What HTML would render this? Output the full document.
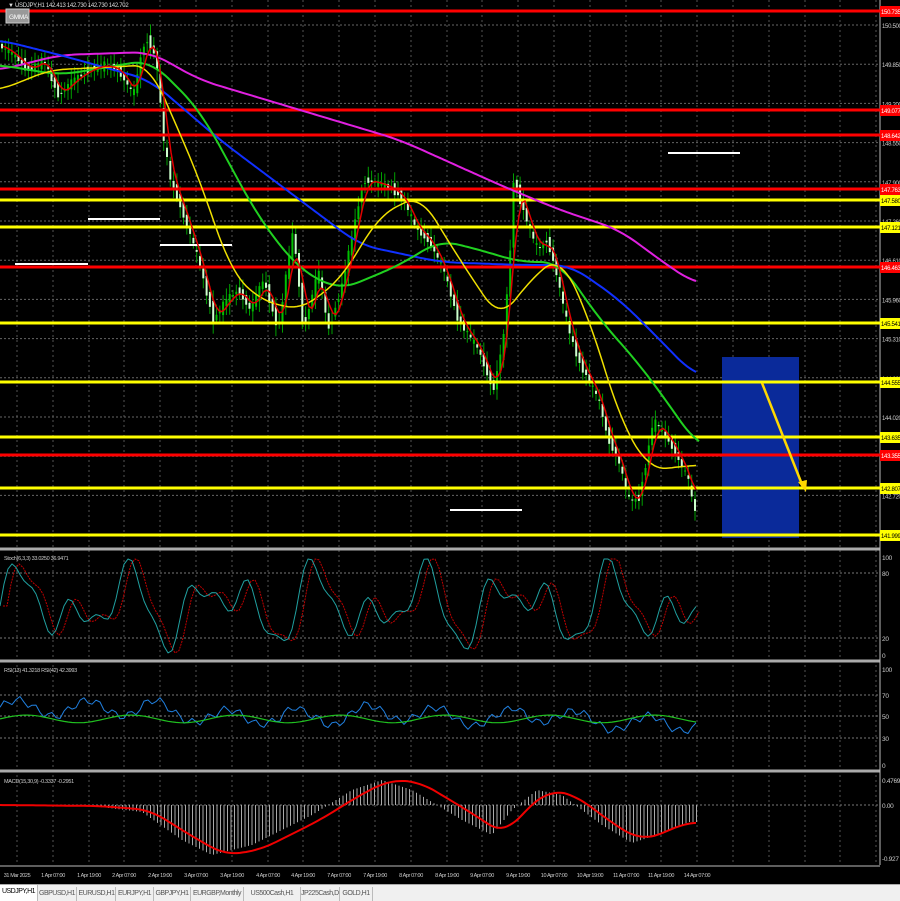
<!DOCTYPE html>
<html><head><meta charset="utf-8"><style>
html,body{margin:0;padding:0;background:#000;width:900px;height:900px;overflow:hidden;font-family:"Liberation Sans",sans-serif}
#tabs{position:absolute;left:0;top:884px;width:900px;height:16px;background:#f0f0f0;border-top:1px solid #aaa;font-size:7px;color:#555}
#tabs span{position:absolute;top:2px;height:14px;line-height:14px;border-right:1px solid #bbb;text-align:center;letter-spacing:-0.5px;white-space:nowrap;overflow:hidden}
</style></head><body>
<svg id="c" width="900" height="884" style="position:absolute;left:0;top:0" font-family="Liberation Sans, sans-serif"></svg>
<div id="tabs">
<span style="left:0;width:37px;background:#fff;color:#000;top:0;height:16px">USDJPY,H1</span>
<span style="left:38px;width:38px">GBPUSD,H1</span>
<span style="left:78px;width:37px">EURUSD,H1</span>
<span style="left:116px;width:37px">EURJPY,H1</span>
<span style="left:154px;width:36px">GBPJPY,H1</span>
<span style="left:191px;width:52px">EURGBP,Monthly</span>
<span style="left:244px;width:56px">US500Cash,H1</span>
<span style="left:301px;width:38px">JP225Cash,Daily</span>
<span style="left:340px;width:32px">GOLD,H1</span>
</div>
<script>
var s='';
function L(x1,y1,x2,y2,c,w,d){s+='<line x1="'+x1+'" y1="'+y1+'" x2="'+x2+'" y2="'+y2+'" stroke="'+c+'" stroke-width="'+(w||1)+'"'+(d?' stroke-dasharray="'+d+'"':'')+'/>';}
function T(x,y,t,c,sz,a,ls){s+='<text x="'+x+'" y="'+y+'" fill="'+(c||'#ccc')+'" font-size="'+(sz||6.5)+'"'+(a?' text-anchor="'+a+'"':'')+' letter-spacing="'+(ls||-0.3)+'">'+t+'</text>';}
function P(pts,c,w,d){s+='<polyline fill="none" stroke="'+c+'" stroke-width="'+(w||1.5)+'"'+(d?' stroke-dasharray="'+d+'"':'')+' stroke-linejoin="round" points="'+pts.map(function(p){return p[0].toFixed(1)+','+p[1].toFixed(1)}).join(' ')+'"/>';}
function interp(pts,x){if(x<=pts[0][0])return pts[0][1];for(var i=1;i<pts.length;i++){if(x<=pts[i][0]){var a=pts[i-1],b=pts[i];var t=(x-a[0])/(b[0]-a[0]);return a[1]+(b[1]-a[1])*t;}}return pts[pts.length-1][1];}
function smooth(pts,step,win){win=win||8;var raw=[];for(var x=pts[0][0];x<=pts[pts.length-1][0];x+=step)raw.push([x,interp(pts,x)]);var o=[];for(var i=0;i<raw.length;i++){var sm=0,n=0;for(var j=-win;j<=win;j++){var k=Math.max(0,Math.min(raw.length-1,i+j));sm+=raw[k][1];n++;}o.push([raw[i][0],sm/n]);}return o;}
var lbl=["31 Mar 2025","1 Apr 07:00","1 Apr 19:00","2 Apr 07:00","2 Apr 19:00","3 Apr 07:00","3 Apr 19:00","4 Apr 07:00","4 Apr 19:00","7 Apr 07:00","7 Apr 19:00","8 Apr 07:00","8 Apr 19:00","9 Apr 07:00","9 Apr 19:00","10 Apr 07:00","10 Apr 19:00","11 Apr 07:00","11 Apr 19:00","14 Apr 07:00"];
for(var i=0;i<25;i++){var gx=Math.round(17+35.8*i);if(gx>878)break;L(gx,0,gx,865,'#555',1,'2,3');}
var hp=["150.500","149.850","149.200","148.550","147.900","147.260","146.610","145.960","145.310","144.660","144.020","143.370","142.720","142.070"];
for(var i=0;i<hp.length;i++){var y=25+i*39.2;L(0,y,880,y,'#666',1,'2,2');T(882,y+3,hp[i],'#ccc',6);}
L(0,549,880,549,'#aaa',3);L(0,661,880,661,'#aaa',3);L(0,771,880,771,'#aaa',3);
L(880,0,880,865,'#bbb',1);L(0,866,880,866,'#bbb',1);
[573,638].forEach(function(a){L(0,a,880,a,'#777',1,'2,2');});
T(882,560,'100');T(882,576,'80');T(882,641,'20');T(882,658,'0');
[695,716,738].forEach(function(a){L(0,a,880,a,'#777',1,'2,2');});
T(882,672,'100');T(882,698,'70');T(882,719,'50');T(882,741,'30');T(882,768,'0');
L(0,805,880,805,'#777',1,'2,2');T(882,783,'0.4769');T(882,808,'0.00');T(882,861,'-0.927');
for(var i=0;i<lbl.length;i++){T(Math.round(17+35.8*i),877,lbl[i],'#ccc',5.5,'middle',-0.4);}
s+='<rect x="722" y="357" width="77" height="181" fill="#0a2a9a"/>';
var pp=[[0,45],[15,55],[30,70],[45,60],[60,95],[75,80],[90,70],[105,65],[120,70],[135,95],[145,45],[150,40],[158,60],[165,140],[172,180],[180,200],[190,230],[200,260],[210,300],[215,320],[228,300],[240,290],[252,310],[265,280],[280,330],[290,260],[295,230],[305,330],[320,270],[330,330],[345,280],[355,230],[365,180],[375,182],[385,185],[395,190],[405,200],[418,230],[430,240],[445,270],[460,320],[470,335],[480,350],[495,390],[505,340],[512,250],[515,180],[525,210],[535,240],[540,250],[548,240],[555,260],[570,330],[580,360],[590,380],[600,400],[610,440],[620,460],[630,500],[640,500],[648,460],[655,420],[662,430],[670,440],[678,455],[685,470],[690,480],[695,510]];
for(var x=2;x<=697;x+=3.3){var c=interp(pp,x+1.6),o=interp(pp,x-1.6);var n=Math.sin(x*1.7)*6+Math.cos(x*0.9)*4;o+=n*0.6;c-=n*0.4;var hi=Math.min(o,c)-3-Math.abs(Math.sin(x*3.1))*8,lo=Math.max(o,c)+3+Math.abs(Math.cos(x*2.3))*8;
var col=c<o?'#00c000':'#ccffcc';L(x,hi,x,lo,'#00a000',1);s+='<rect x="'+(x-1)+'" y="'+Math.min(o,c)+'" width="2" height="'+Math.max(1,Math.abs(o-c))+'" fill="'+col+'"/>';}
var lv=[[11,'#f00','150.735'],[110,'#f00','149.077'],[135,'#f00','148.642'],[189,'#f00','147.763'],[200,'#ff0','147.580'],[227,'#ff0','147.121'],[267,'#f00','146.463'],[323,'#ff0','145.541'],[382,'#ff0','144.555'],[437,'#ff0','143.635'],[455,'#f00','143.355'],[488,'#ff0','142.807'],[535,'#ff0','141.999']];
lv.forEach(function(a){L(0,a[0],880,a[0],a[1],3);s+='<rect x="880" y="'+(a[0]-5)+'" width="20" height="11" fill="'+a[1]+'"/>';T(881,a[0]+3,a[2],a[1]=='#f00'?'#fff':'#000',6);});
L(668,153,740,153,'#fff',2);L(88,219,160,219,'#fff',2);L(160,245,232,245,'#fff',2);L(15,264,88,264,'#fff',2);L(450,510,522,510,'#fff',2);
P(smooth([[0,70],[60,55],[150,52],[200,80],[300,110],[400,140],[500,185],[560,210],[620,230],[660,260],[697,285]],3,6),'#e020e0',2);
P(smooth([[0,40],[60,55],[150,80],[220,140],[300,200],[360,245],[440,262],[520,265],[570,265],[620,300],[660,340],[697,378]],3,6),'#1030ff',2);
P(smooth([[0,65],[60,75],[150,60],[200,110],[260,220],[300,270],[340,290],[400,265],[440,240],[480,250],[520,262],[560,262],[600,320],[640,365],[680,420],[700,450]],3,6),'#20d020',2);
P(smooth([[0,90],[50,70],[150,65],[200,180],[230,270],[260,300],[300,310],[340,280],[380,215],[420,195],[460,260],[500,320],[530,280],[560,255],[590,320],[620,420],[650,470],[697,465]],3,5),'#f0e000',1.5);
P(smooth(pp.map(function(p){return [p[0]+3,p[1]]}),3,2),'#e00000',1.5);
L(762,383,803,487,'#ffd800',2.5);s+='<polygon points="806,492 798,482 807,480" fill="#ffd800"/>';
var st=[],sd=[];for(var x=0;x<=697;x+=4){var v=50+45*Math.sin(x*0.085)*Math.cos(x*0.021)+10*Math.sin(x*0.21);v=Math.max(2,Math.min(98,v));st.push([x,655-v*0.98]);}
for(var i=0;i<st.length;i++){sd.push([st[i][0]+3,st[Math.max(0,i-1)][1]]);}
P(sd,'#c00000',1,'2,1');P(st,'#20a0a0',1);
var r1=[],r2=[];for(var x=0;x<=697;x+=4){var b=interp(pp,x);var v=50-(b-300)*0.04+8*Math.sin(x*0.09)+4*Math.sin(x*0.4);r1.push([x,765-v*0.96]);r2.push([x,765-(48+4*Math.sin(x*0.06))*0.96]);}
P(r1,'#2080e0',1);P(r2,'#20c020',1.2);
var mh=[[0,805],[100,806],[150,812],[190,840],[220,855],[260,845],[320,815],[360,790],[390,780],[420,790],[470,820],[500,835],[520,810],[545,790],[570,795],[610,825],[640,843],[665,835],[697,822]];
for(var x=0;x<=697;x+=3.5){var y=interp(mh,x+8);L(x,805,x,y,'#aaa',1);}
P(smooth([[0,805],[100,806],[150,810],[190,835],[225,855],[260,850],[320,820],[360,795],[390,780],[420,782],[470,812],[505,835],[525,810],[550,790],[575,795],[615,825],[640,840],[665,833],[685,822],[697,823]],3,5),'#f00000',2);
T(8,7,'▼ USDJPY,H1  142.413 142.730 142.730 142.702','#ddd',6);
s+='<rect x="6" y="9" width="23" height="14" fill="#999" stroke="#ccc"/>';T(9,19,'GMMA','#fff',6.5);
T(4,560,'Stoch(6,3,3) 33.0250 36.9471','#ccc',5.5);
T(4,672,'RSI(13) 41.3218  RSI(42) 42.3993','#ccc',5.5);
T(4,783,'MACD(15,30,9) -0.3337 -0.2951','#ccc',5.5);
document.getElementById('c').innerHTML=s;
</script>
</body></html>
